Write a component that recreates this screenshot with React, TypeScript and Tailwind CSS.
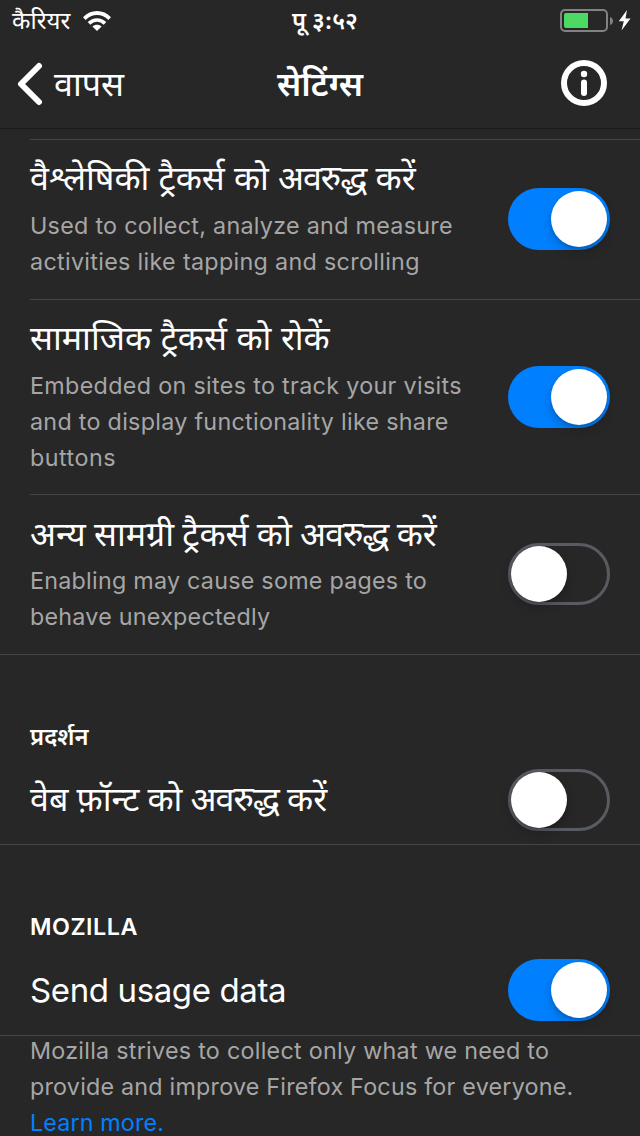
import React from "react";

function WifiIcon() {
  return (
    <svg width="28" height="20" viewBox="0 0 28 20" fill="none" className="block">
      <path d="M1.300 7.600C8.500 0.200 19.500 0.200 26.700 7.600" stroke="#fff" strokeWidth="3.900" />
      <path d="M6 12.300C10.600 7.900 17.400 7.900 22 12.300" stroke="#fff" strokeWidth="3.700" />
      <path d="M14 20L9.400 15.500C12 13 16 13 18.600 15.500Z" fill="#fff" />
    </svg>
  );
}

function BatteryIcon() {
  return (
    <svg width="72" height="24" viewBox="0 0 72 24" fill="none" className="block">
      <rect x="1" y="1" width="46" height="21" rx="4" stroke="#828282" strokeWidth="2" />
      <path d="M4 6a2 2 0 0 1 2-2h22v15H6a2 2 0 0 1-2-2z" fill="#4cd964" />
      <path d="M50 8c1.700 0.600 3 2 3 4s-1.300 3.400-3 4z" fill="#828282" />
      <path d="M67 1L58.800 12.300h5L61.500 21.500 70.500 9.500h-5z" fill="#fff" />
    </svg>
  );
}

function Switch({ on }: { on: boolean }) {
  return (
    <div
      role="switch"
      aria-checked={on}
      className={
        on
          ? "flex h-[62px] w-[102px] shrink-0 items-center justify-end rounded-full bg-[#0080ff] p-[3px]"
          : "flex h-[62px] w-[102px] shrink-0 items-center justify-start rounded-full border-[3px] border-[#585c62]"
      }
    >
      <div className="size-14 rounded-full bg-white shadow-[0_5px_12px_rgba(0,0,0,0.2),0_2px_3px_rgba(0,0,0,0.12)]" />
    </div>
  );
}

type Line = { text: string; spacing: string };

function Description({ lines }: { lines: Line[] }) {
  return (
    <p className="text-[23.3px] leading-9 text-[#a6a6a6]">
      {lines.map((l) => (
        <span key={l.text} className={"block whitespace-nowrap " + l.spacing}>
          {l.text}
        </span>
      ))}
    </p>
  );
}

function BlockWord() {
  return <span className="tracking-[-1px]">अवरुद्ध</span>;
}

function TrackerRow({
  title,
  titleClass,
  lines,
  on,
  height,
  last,
}: {
  title: React.ReactNode;
  titleClass: string;
  lines: Line[];
  on: boolean;
  height: string;
  last?: boolean;
}) {
  return (
    <div className={last ? "border-b border-[#454548]" : "pl-[30px]"}>
      <div
        className={
          (last
            ? "flex items-center justify-between pr-[30px] pl-[30px] "
            : "flex items-center justify-between border-b border-[#454548] pr-[30px] ") + height
        }
      >
        <div className="self-start">
          <h2 className={"h-[68px] text-[34px] leading-[48px] whitespace-nowrap text-white " + titleClass}>
            {title}
          </h2>
          <Description lines={lines} />
        </div>
        <div className="pb-px">
          <Switch on={on} />
        </div>
      </div>
    </div>
  );
}

export default function App() {
  return (
    <div className="h-[1136px] w-[640px] overflow-hidden bg-[#272727] font-['Inter','Noto_Sans',sans-serif] text-white">
      <div className="flex h-10 items-center justify-between pt-px pr-2 pl-3">
        <div className="flex w-[240px] items-center gap-[13px]">
          <span className="text-[24px] leading-10">कैरियर</span>
          <WifiIcon />
        </div>
        <div className="w-[140px] pl-[6px] text-center text-[23.5px] leading-10 font-semibold">पू ३:५२</div>
        <div className="flex w-[240px] justify-end">
          <BatteryIcon />
        </div>
      </div>
      <header className="flex h-[89px] items-center justify-between border-b border-[#1b1b1b] pr-8 pl-[17px]">
        <div className="flex w-[200px] items-center gap-[11px]">
          <svg width="26" height="44" viewBox="0 0 26 44" fill="none">
            <path d="M22 4L4 22l18 18" stroke="#fff" strokeWidth="6" strokeLinecap="round" strokeLinejoin="round" />
          </svg>
          <span className="text-[34px] leading-[48px]">वापस</span>
        </div>
        <h1 className="ml-[15px] text-center text-[34px] leading-[48px] font-semibold">सेटिंग्स</h1>
        <div className="flex w-[200px] justify-end pb-[2px]">
          <svg width="48" height="48" viewBox="0 0 48 48" fill="none">
            <circle cx="24" cy="24" r="20" stroke="#fff" strokeWidth="6" />
            <circle cx="24" cy="15" r="3.200" fill="#fff" />
            <rect x="21" y="20.500" width="6" height="16.500" rx="3" fill="#fff" />
          </svg>
        </div>
      </header>
      <div className="ml-[30px] h-[11px] border-b border-[#454548]" />
      <TrackerRow
        title={
          <>
            वैश्लेषिकी ट्रैकर्स को <BlockWord /> करें
          </>
        }
        titleClass="pt-[14px] [word-spacing:-0.4px]"
        height="h-[160px]"
        lines={[
          { text: "Used to collect, analyze and measure", spacing: "tracking-[0.28px]" },
          { text: "activities like tapping and scrolling", spacing: "tracking-[0.32px]" },
        ]}
        on
      />
      <TrackerRow
        title="सामाजिक ट्रैकर्स को रोकें"
        titleClass="pt-[14px]"
        height="h-[195px]"
        lines={[
          { text: "Embedded on sites to track your visits", spacing: "tracking-[0.33px]" },
          { text: "and to display functionality like share", spacing: "tracking-[0.29px]" },
          { text: "buttons", spacing: "tracking-[0.5px]" },
        ]}
        on
      />
      <TrackerRow
        title={
          <>
            अन्य सामग्री ट्रैकर्स को <BlockWord /> करें
          </>
        }
        titleClass="pt-[15px] [word-spacing:-1.3px]"
        height="h-[159px]"
        lines={[
          { text: "Enabling may cause some pages to", spacing: "tracking-[0.25px]" },
          { text: "behave unexpectedly", spacing: "tracking-[0.24px]" },
        ]}
        on={false}
        last
      />
      <section className="h-[190px] border-b border-[#454548] px-[30px] pt-[62px]">
        <h3 className="h-10 text-[23.7px] leading-10 font-semibold">प्रदर्शन</h3>
        <div className="flex h-[86px] items-center justify-between">
          <span className="pb-[2px] text-[34px] leading-[48px] [word-spacing:-1.4px]">
            वेब फ़ॉन्ट को <BlockWord /> करें
          </span>
          <Switch on={false} />
        </div>
      </section>
      <section className="h-[191px] border-b border-[#454548] px-[30px] pt-[62px]">
        <h3 className="h-10 text-[23.3px] leading-10 font-semibold tracking-[0.5px]">MOZILLA</h3>
        <div className="flex h-[86px] items-center justify-between">
          <span className="text-[33px] leading-[48px] tracking-[-0.38px]">Send usage data</span>
          <Switch on />
        </div>
      </section>
      <div className="-mt-[3px] px-[30px]">
        <Description
          lines={[
            { text: "Mozilla strives to collect only what we need to", spacing: "tracking-[0.27px]" },
            { text: "provide and improve Firefox Focus for everyone.", spacing: "tracking-[0.22px]" },
          ]}
        />
        <a className="block text-[23.3px] leading-9 tracking-[0.13px] text-[#0080ff]">Learn more.</a>
      </div>
    </div>
  );
}
